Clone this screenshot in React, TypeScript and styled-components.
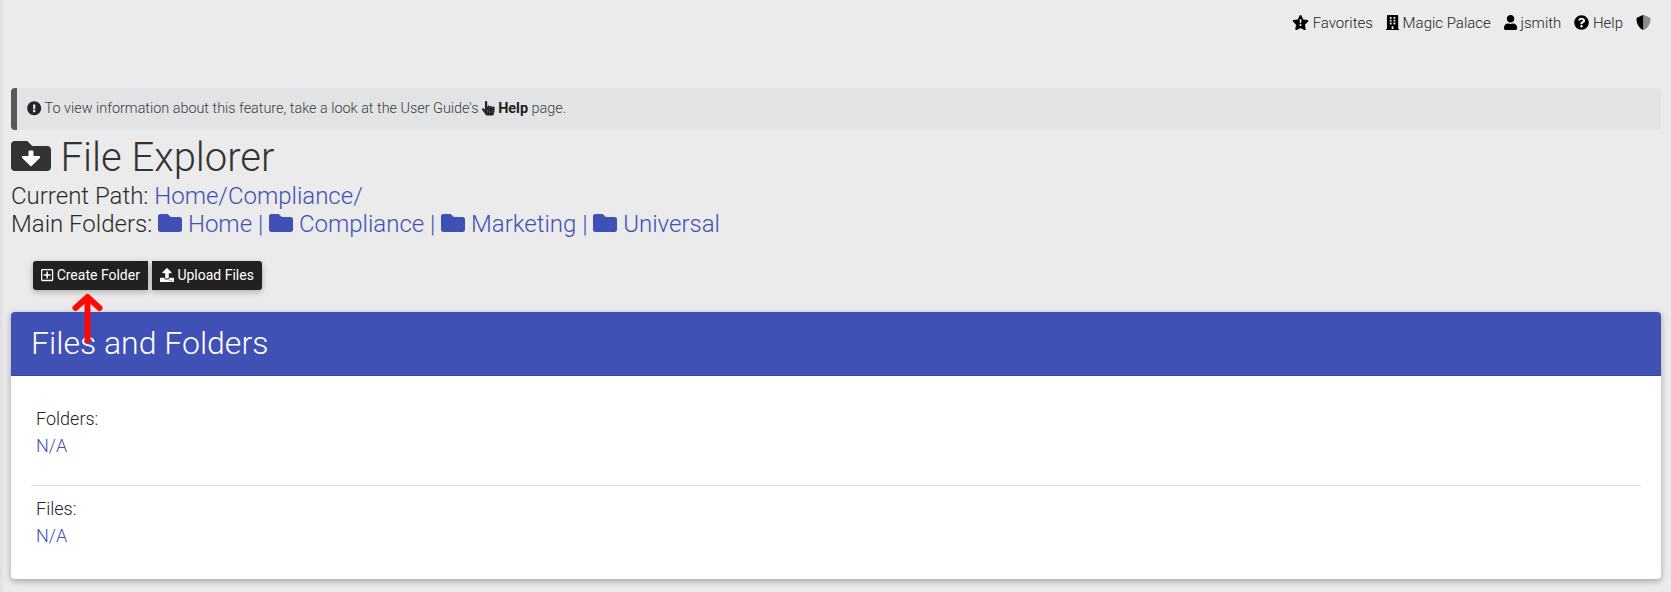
import React from "react";
import styled, { createGlobalStyle, css } from "styled-components";
import {
  FaBuilding, FaUser, FaQuestionCircle, FaExclamationCircle, FaHandPointer,
  FaFolder, FaRegPlusSquare, FaUpload,
} from "react-icons/fa";

const GlobalStyle = createGlobalStyle`
  * { box-sizing: border-box; }
  body {
    margin: 0;
    background: #ebebeb;
    color: #212529;
    font-family: Roboto, sans-serif;
    font-weight: 300;
    font-size: 16px;
    line-height: 1.5;
  }
  svg { display: inline-block; flex: none; overflow: visible; }
`;

const Page = styled.div`
  height: 592px;
  overflow: hidden;
  padding: 0 10px 0 11px;
  box-shadow: inset 5px 0 5px -4px rgba(0, 0, 0, 0.08);
`;

const TopNav = styled.nav`
  display: flex;
  justify-content: flex-end;
  align-items: center;
  height: 46px;
  padding-right: 10px;
  margin-bottom: 42px;
`;

const narrow = css`
  width: 0.875em;
  height: 1em;
`;
const BuildingIcon = styled(FaBuilding)`${narrow}`;
const UserIcon = styled(FaUser)`${narrow}`;
const PointerIcon = styled(FaHandPointer)`${narrow}`;
const PlusIcon = styled(FaRegPlusSquare)`${narrow}`;

const NavItem = styled.a`
  display: flex;
  align-items: center;
  margin-left: 13px;
  font-size: 15px;
  color: #222;
  gap: 3.6px;
  svg { color: #000; margin-bottom: 1px; }
`;

const Notice = styled.div`
  height: 42px;
  padding-left: 10px;
  border-left: 6px solid #58595b;
  border-radius: 4px;
  background: #e2e3e5;
  color: #383d41;
  font-size: 14.4px;
  line-height: 41px;
  svg { color: #212529; vertical-align: -2px; }
  strong { color: #212121; font-weight: 700; }
`;

const Title = styled.h1`
  display: flex;
  align-items: center;
  gap: 9.5px;
  height: 48px;
  margin: 4px 0 0;
  font-size: 40px;
  font-weight: 300;
  line-height: 48px;
  color: #333;
  svg { margin-bottom: 4px; }
`;

const PathLine = styled.div`
  height: 28px;
  color: #2b2b2b;
  font-size: 24px;
  line-height: 28px;
  white-space: pre;
  svg { vertical-align: -3px; }
`;

const Link = styled.a`
  color: #3f51b5;
`;

const Actions = styled.div`
  display: flex;
  gap: 4px;
  margin: 23px 0 22px 22px;
`;

const ActionButton = styled.button<{ $side: "left" | "right"; $width: number }>`
  display: flex;
  align-items: center;
  gap: 3.4px;
  width: ${(p) => p.$width}px;
  height: 29px;
  padding: 0 0 1px 8px;
  border: 0;
  border-radius: ${(p) => (p.$side === "left" ? "3px 0 0 3px" : "0 3px 3px 0")};
  background: #212121;
  color: #fff;
  font: 400 14px Roboto, sans-serif;
  white-space: nowrap;
  box-shadow: 0 2px 5px rgba(0, 0, 0, 0.16), 0 2px 8px rgba(0, 0, 0, 0.12);
`;

const Pointer = styled.svg`
  position: absolute;
  left: 72px;
  top: 293px;
`;

const Card = styled.section`
  height: 267px;
  border-radius: 4px;
  background: #fff;
  box-shadow: 0 2px 5px rgba(0, 0, 0, 0.2), 0 2px 10px rgba(0, 0, 0, 0.14);
`;

const CardHeader = styled.h2`
  height: 64px;
  margin: 0;
  padding-left: 20px;
  border-bottom: 1px solid #3a499c;
  border-radius: 4px 4px 0 0;
  background: #3f51b5;
  color: #fff;
  font-size: 32px;
  font-weight: 300;
  line-height: 62px;
`;

const CardBody = styled.div`
  padding: 29px 20px 0;
`;

const Group = styled.div`
  padding-left: 5px;
  font-size: 18px;
  line-height: 27px;
`;

const Divider = styled.hr`
  margin: 26px 0 9px;
  border: 0;
  border-top: 1px solid #dedede;
`;

const StarIcon = () => (
  <svg width="17" height="15" viewBox="0 0 576 512">
    <path fill="currentColor" d="M259 18l-65 132-146 21c-26 4-37 36-18 55l106 103-25 145c-4 26 23 46 47 34l130-68 130 68c24 12 51-8 47-34l-25-145 106-103c19-19 8-51-18-55l-146-21-65-132c-12-24-46-24-58 0z" />
    <path fill="#ebebeb" d="M256 148h64l-9 136h-46z" />
    <circle cx="288" cy="340" r="36" fill="#ebebeb" />
  </svg>
);

const ShieldIcon = () => (
  <svg width="15" height="15" viewBox="0 0 512 512">
    <path fill="#000" d="M256 0c-6 0-12 1-18 4L46 84c-18 7-30 25-30 44 0 198 115 336 222 380 6 3 12 4 18 4z" />
    <path fill="#8d8d8d" d="M256 0c6 0 12 1 18 4l192 80c18 7 30 25 30 44 0 198-114 336-222 380-6 3-12 4-18 4z" />
  </svg>
);

const FolderDownIcon = () => (
  <svg width="40" height="40" viewBox="0 0 512 512">
    <path fill="currentColor" d="M464 128H272l-64-64H48C21 64 0 85 0 112v288c0 27 21 48 48 48h416c27 0 48-21 48-48V176c0-27-21-48-48-48z" />
    <path fill="#fff" d="M369 281L264 385c-5 5-11 5-16 0L143 281c-7-7-2-25 8-25h73v-56c0-9 7-16 16-16h32c9 0 16 7 16 16v56h73c10 0 15 18 8 25z" />
  </svg>
);

const folders = ["Home", "Compliance", "Marketing", "Universal"];

export default function App() {
  return (
    <Page>
      <GlobalStyle />
      <TopNav>
        <NavItem><StarIcon />Favorites</NavItem>
        <NavItem><BuildingIcon />Magic Palace</NavItem>
        <NavItem><UserIcon />jsmith</NavItem>
        <NavItem><FaQuestionCircle size={15} />Help</NavItem>
        <NavItem><ShieldIcon /></NavItem>
      </TopNav>
      <Notice>
        <FaExclamationCircle size={14.4} /> To view information about this feature, take a look at the User Guide's{" "}
        <PointerIcon /> <strong>Help</strong> page.
      </Notice>
      <Title><FolderDownIcon />File Explorer</Title>
      <PathLine>Current Path: <Link>Home/Compliance/</Link></PathLine>
      <PathLine>
        {"Main Folders: "}
        {folders.map((name, i) => (
          <Link key={name}>{i > 0 && " | "}<FaFolder size={24} /> {name}</Link>
        ))}
      </PathLine>
      <Actions>
        <ActionButton $side="left" $width={115}><PlusIcon />Create Folder</ActionButton>
        <ActionButton $side="right" $width={110}><FaUpload size={14} />Upload Files</ActionButton>
      </Actions>
      <Card>
        <CardHeader>Files and Folders</CardHeader>
        <CardBody>
          <Group>Folders:<br /><Link>N/A</Link></Group>
          <Divider />
          <Group>Files:<br /><Link>N/A</Link></Group>
        </CardBody>
      </Card>
      <Pointer width="31" height="50" viewBox="0 0 31 50" fill="none" stroke="#fe0808" strokeLinecap="round" strokeLinejoin="round">
        <path d="M15.5 5V47" strokeWidth="6" />
        <path d="M3.5 15L15.5 4L27.5 15" strokeWidth="6" />
      </Pointer>
    </Page>
  );
}
